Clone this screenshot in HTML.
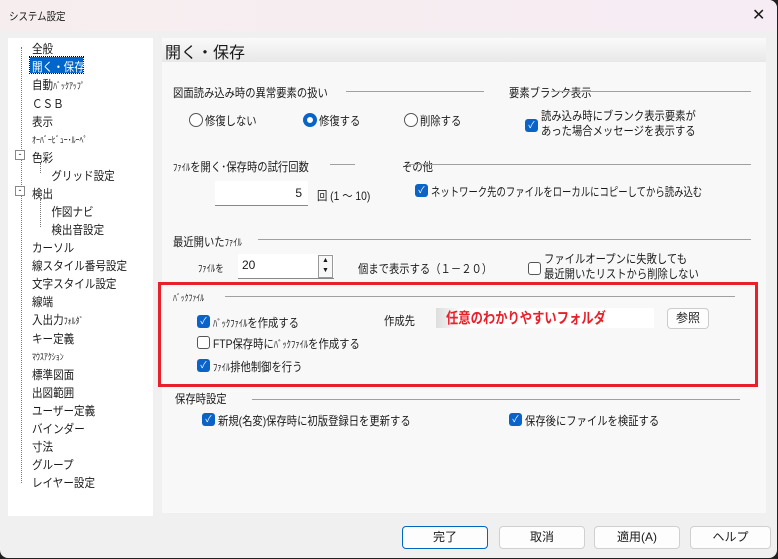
<!DOCTYPE html>
<html><head><meta charset="utf-8"><style>
*{margin:0;padding:0;box-sizing:border-box}
body{width:778px;height:559px;overflow:hidden;background:#202020;font-family:"Liberation Sans","Noto Sans CJK JP",sans-serif;font-size:12px;color:#1a1a1a}
.win{position:absolute;left:0;top:0;width:777px;height:558px;background:#f0f0f0;border-radius:0 8px 8px 8px;overflow:hidden}
.title{position:absolute;left:0;top:0;width:100%;height:31px;background:linear-gradient(90deg,#f6eeee,#f6ecf4)}
.a{position:absolute;white-space:nowrap}
.t{position:absolute;white-space:nowrap;transform:scaleX(.86);transform-origin:left top}
.tree{position:absolute;left:8px;top:38px;width:145px;height:478px;background:#fff}
.hdr{position:absolute;left:162px;top:38px;width:604px;height:24px;background:linear-gradient(#fafafa,#e8e8e8);font-size:16px;padding:1px 3px}
.pane{position:absolute;left:162px;top:62px;width:604px;height:451px;background:#f8f8f8}
.line{position:absolute;height:1px;background:#a0a0a0}
.cb{position:absolute;width:13px;height:13px;border-radius:3px;background:#0a64c8;color:#fff;font-size:9px;line-height:13px;text-align:center}
.cbo{position:absolute;width:13px;height:13px;border-radius:3px;border:1px solid #555;background:#fff}
.rb{position:absolute;width:14px;height:14px;border-radius:50%;border:1px solid #555;background:#fff}
.rbs{position:absolute;width:14px;height:14px;border-radius:50%;border:4px solid #0a64c8;background:#fff}
.btn{position:absolute;top:526px;height:23px;background:#fdfdfd;border:1px solid #d0d0d0;border-radius:4px;text-align:center;line-height:21px}
.vdot{position:absolute;border-left:1px dotted #777}
</style></head><body><div class="win">
<div class="title"></div>
<div class="t" style="left:9px;top:8px;font-size:11px">システム設定</div>
<div class="a" style="left:752px;top:5px;font-size:16px">✕</div>

<div class="tree"></div>
<div class="vdot" style="left:21px;top:47px;height:436px"></div>
<div class="vdot" style="left:40px;top:163px;height:10px"></div>
<div class="vdot" style="left:40px;top:199px;height:28px"></div>
<div class="a" style="left:15px;top:150px;width:10px;height:10px;border:1px solid #888;background:#fff;font-size:9px;line-height:7px;text-align:center">-</div>
<div class="a" style="left:15px;top:186px;width:10px;height:10px;border:1px solid #888;background:#fff;font-size:9px;line-height:7px;text-align:center">-</div>
<div class="a" style="left:30px;top:57px;width:53px;height:16px;background:#0066cc;outline:1px dotted #000"></div>
<div style="position:absolute;left:32px;top:40px;line-height:18px;font-size:12px;transform:scaleX(.88);transform-origin:left top;white-space:nowrap">
<div>全般</div><div style="color:#fff">開く・保存</div><div>自動<span style="font-size:9px">ﾊﾞｯｸｱｯﾌﾟ</span></div><div>ＣＳＢ</div><div>表示</div><div style="font-size:9px">ｵｰﾊﾞｰﾋﾞｭｰ･ﾙｰﾍﾟ</div><div>色彩</div><div style="padding-left:22px">グリッド設定</div><div>検出</div><div style="padding-left:22px">作図ナビ</div><div style="padding-left:22px">検出音設定</div><div>カーソル</div><div>線スタイル番号設定</div><div>文字スタイル設定</div><div>線端</div><div>入出力<span style="font-size:9px">ﾌｫﾙﾀﾞ</span></div><div>キー定義</div><div style="font-size:9px">ﾏｳｽｱｸｼｮﾝ</div><div>標準図面</div><div>出図範囲</div><div>ユーザー定義</div><div>バインダー</div><div>寸法</div><div>グループ</div><div>レイヤー設定</div>
</div>

<div class="hdr">開く・保存</div>
<div class="pane"></div>

<div class="t" style="left:173px;top:84px">図面読み込み時の異常要素の扱い</div>
<div class="line" style="left:346px;top:91px;width:138px"></div>
<div class="t" style="left:509px;top:84px">要素ブランク表示</div>
<div class="line" style="left:551px;top:91px;width:200px"></div>
<div class="rb" style="left:189px;top:113px"></div><div class="t" style="left:205px;top:112px">修復しない</div>
<div class="rbs" style="left:303px;top:113px"></div><div class="t" style="left:319px;top:112px">修復する</div>
<div class="rb" style="left:404px;top:113px"></div><div class="t" style="left:420px;top:112px">削除する</div>
<div class="cb" style="left:525px;top:119px">✓</div>
<div class="t" style="left:541px;top:109px;line-height:15px">読み込み時にブランク表示要素が<br>あった場合メッセージを表示する</div>

<div class="t" style="left:173px;top:158px"><span style="font-size:10px">ﾌｧｲﾙ</span>を開く･保存時の試行回数</div>
<div class="line" style="left:330px;top:164px;width:25px"></div>
<div class="t" style="left:402px;top:158px">その他</div>
<div class="line" style="left:409px;top:164px;width:342px"></div>
<div class="a" style="left:215px;top:181px;width:93px;height:25px;background:#fff;border-bottom:1px solid #888;text-align:right;padding:5px 6px 0 0">5</div>
<div class="t" style="left:317px;top:187px">回 (1 〜 10)</div>
<div class="cb" style="left:415px;top:184px">✓</div>
<div class="t" style="left:431px;top:183px;transform:scaleX(.78)">ネットワーク先のファイルをローカルにコピーしてから読み込む</div>

<div class="t" style="left:173px;top:233px">最近開いた<span style="font-size:10px">ﾌｧｲﾙ</span></div>
<div class="line" style="left:258px;top:239px;width:493px"></div>
<div class="t" style="left:198px;top:260px;font-size:10px">ﾌｧｲﾙを</div>
<div class="a" style="left:238px;top:254px;width:96px;height:25px;background:#fff;border-bottom:1px solid #888;padding:4px 0 0 4px">20</div>
<div class="a" style="left:318px;top:255px;width:15px;height:23px;border:1px solid #999;background:#f8f8f8;font-size:7px;line-height:10px;text-align:center">▲<br>▼</div>
<div class="t" style="left:358px;top:260px">個まで表示する（１－２０）</div>
<div class="cbo" style="left:528px;top:262px"></div>
<div class="t" style="left:544px;top:252px;line-height:15px">ファイルオープンに失敗しても<br>最近開いたリストから削除しない</div>

<div class="a" style="left:158px;top:282px;width:600px;height:105px;border:3px solid #e8202a"></div>
<div class="t" style="left:173px;top:291px;font-size:9px">ﾊﾞｯｸﾌｧｲﾙ</div>
<div class="line" style="left:225px;top:296px;width:510px"></div>
<div class="cb" style="left:197px;top:315px">✓</div><div class="t" style="left:213px;top:314px"><span style="font-size:10px">ﾊﾞｯｸﾌｧｲﾙ</span>を作成する</div>
<div class="t" style="left:384px;top:312px">作成先</div>
<div class="a" style="left:436px;top:308px;width:218px;height:20px;background:linear-gradient(90deg,#ddd,#fff 12%);"></div>
<div class="t" style="left:446px;top:307px;color:#e8202a;font-weight:bold;font-size:15px;transform:scaleX(.82)">任意のわかりやすいフォルダ</div>
<div class="a" style="left:667px;top:308px;width:42px;height:21px;background:#fdfdfd;border:1px solid #ccc;border-radius:4px;text-align:center;line-height:19px">参照</div>
<div class="cbo" style="left:197px;top:336px"></div><div class="t" style="left:213px;top:335px">FTP保存時に<span style="font-size:10px">ﾊﾞｯｸﾌｧｲﾙ</span>を作成する</div>
<div class="cb" style="left:197px;top:359px">✓</div><div class="t" style="left:213px;top:358px"><span style="font-size:10px">ﾌｧｲﾙ</span>排他制御を行う</div>

<div class="t" style="left:175px;top:390px">保存時設定</div>
<div class="line" style="left:252px;top:399px;width:488px"></div>
<div class="cb" style="left:202px;top:413px">✓</div><div class="t" style="left:218px;top:412px">新規(名変)保存時に初版登録日を更新する</div>
<div class="cb" style="left:509px;top:413px">✓</div><div class="t" style="left:525px;top:412px">保存後にファイルを検証する</div>

<div class="btn" style="left:402px;width:86px;border-color:#0067c0">完了</div>
<div class="btn" style="left:499px;width:86px">取消</div>
<div class="btn" style="left:594px;width:86px">適用(A)</div>
<div class="btn" style="left:690px;width:81px">ヘルプ</div>
</div></body></html>
